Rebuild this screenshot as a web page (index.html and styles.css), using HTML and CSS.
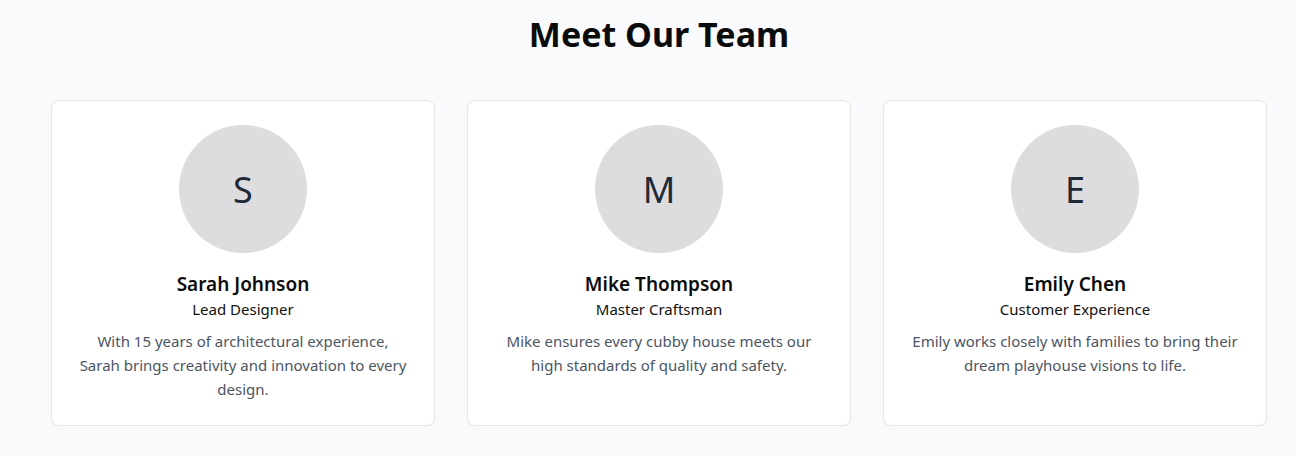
FILE: index.html
```html
<!DOCTYPE html>
<html lang="en">
<head>
<meta charset="utf-8">
<title>Meet Our Team</title>
<link rel="stylesheet" href="styles.css">
</head>
<body>
<section class="team">
  <h2 class="team-title">Meet Our Team</h2>
  <div class="team-grid">
    <div class="card">
      <div class="avatar">S</div>
      <h3 class="name">Sarah Johnson</h3>
      <p class="role">Lead Designer</p>
      <p class="bio">With 15 years of architectural experience, Sarah brings creativity and innovation to every design.</p>
    </div>
    <div class="card">
      <div class="avatar">M</div>
      <h3 class="name">Mike Thompson</h3>
      <p class="role">Master Craftsman</p>
      <p class="bio">Mike ensures every cubby house meets our high standards of quality and safety.</p>
    </div>
    <div class="card">
      <div class="avatar">E</div>
      <h3 class="name">Emily Chen</h3>
      <p class="role">Customer Experience</p>
      <p class="bio">Emily works closely with families to bring their dream playhouse visions to life.</p>
    </div>
  </div>
</section>
</body>
</html>
```
FILE: styles.css
```css
* { box-sizing: border-box; }
html, body {
  margin: 0;
  padding: 0;
  background: #f9fafb;
  font-family: "Noto Sans", "Open Sans", sans-serif;
  color: #111827;
}
.team {
  padding: 14px 0 0 51px;
  width: 1317px;
}
.team-title {
  margin: 0 0 46px 0;
  width: 1216px;
  text-align: center;
  font-size: 34px;
  line-height: 40px;
  font-weight: 700;
  color: #0b0b0b;
}
.team-grid {
  width: 1216px;
  display: grid;
  grid-template-columns: repeat(3, 1fr);
  gap: 32px;
}
.card {
  background: #fff;
  border: 1px solid #e5e7eb;
  border-radius: 8px;
  box-shadow: 0 1px 2px rgba(0,0,0,0.04);
  padding: 24px;
  display: flex;
  flex-direction: column;
  align-items: center;
  text-align: center;
}
.avatar {
  width: 128px;
  height: 128px;
  border-radius: 50%;
  background: #dddde0;
  display: flex;
  align-items: center;
  justify-content: center;
  font-size: 36px;
  color: #1f2937;
  margin-bottom: 18px;
}
.name {
  margin: 0;
  font-size: 19px;
  line-height: 26px;
  font-weight: 600;
  color: #0b0b0b;
}
.role {
  margin: 0;
  font-size: 15px;
  line-height: 24px;
  color: #111;
}
.bio {
  margin: 8px 0 0 0;
  font-size: 15px;
  line-height: 24px;
  color: #4b5563;
}
```
